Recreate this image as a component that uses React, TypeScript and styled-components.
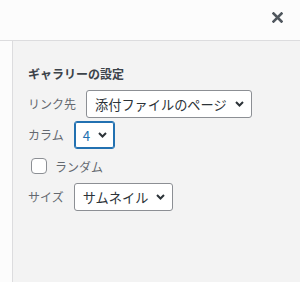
import React from "react";
import styled, { createGlobalStyle } from "styled-components";

const Global = createGlobalStyle`
  html, body { margin: 0; padding: 0; }
  body {
    width: 300px;
    height: 282px;
    overflow: hidden;
    font-family: "Noto Sans CJK JP", "Noto Sans", sans-serif;
    background: #fcfcfc;
  }
`;

const Frame = styled.div`
  width: 300px;
  height: 282px;
  display: flex;
  flex-direction: column;
`;

const Header = styled.header`
  height: 41px;
  flex: none;
  display: flex;
  justify-content: flex-end;
  align-items: center;
  padding-right: 17px;
  padding-bottom: 5px;
  box-sizing: border-box;
  background: #fcfcfc;
  border-bottom: 1px solid #dcdcde;
`;

const CloseButton = styled.button`
  border: 0;
  background: none;
  padding: 0;
  width: 12px;
  height: 12px;
  display: flex;
  align-items: center;
  justify-content: center;
  color: #50575e;
  cursor: pointer;
`;

const Body = styled.div`
  flex: 1;
  display: flex;
`;

const Gutter = styled.div`
  width: 12px;
  flex: none;
  background: #fcfcfc;
  border-right: 1px solid #dcdcde;
`;

const Panel = styled.section`
  flex: 1;
  background: #f3f3f3;
  padding: 24px 0 0 15px;
  display: flex;
  flex-direction: column;
  align-items: flex-start;
`;

const Title = styled.h2`
  margin: 0 0 7px 0;
  font-size: 12px;
  line-height: 18px;
  font-weight: 700;
  color: #3c434a;
`;

const Row = styled.div`
  display: flex;
  align-items: center;
  height: 28px;
  margin-bottom: 3px;
`;

const Label = styled.span`
  font-size: 12px;
  color: #646970;
  margin-right: 10px;
  line-height: 28px;
`;

const SelectBox = styled.div<{ $focused?: boolean }>`
  display: inline-flex;
  align-items: center;
  height: 28px;
  box-sizing: border-box;
  border: 1px solid ${(p) => (p.$focused ? "#2271b1" : "#8c8f94")};
  box-shadow: ${(p) => (p.$focused ? "inset 0 0 0 1px #2271b1" : "none")};
  border-radius: 3px;
  background: #fff;
  padding: 0 7px 0 8px;
  font-size: 13.2px;
  color: ${(p) => (p.$focused ? "#2271b1" : "#2c3338")};
  white-space: nowrap;
`;

const Chevron = styled.svg`
  margin-left: 8px;
  flex: none;
  color: #2c3338;
`;

const CheckRow = styled.label`
  display: flex;
  align-items: center;
  height: 28px;
  margin-bottom: 3px;
  padding-left: 3px;
`;

const Box = styled.span`
  width: 16px;
  height: 16px;
  box-sizing: border-box;
  border: 1px solid #8c8f94;
  border-radius: 4px;
  background: #fff;
  margin-right: 8px;
`;

const CheckText = styled.span`
  font-size: 12px;
  color: #646970;
`;

const Arrow = () => (
  <Chevron width="9" height="6" viewBox="0 0 9 6">
    <polyline
      points="1,1 4.5,4.5 8,1"
      fill="none"
      stroke="currentColor"
      strokeWidth="2"
    />
  </Chevron>
);

const Select = ({ value, focused }: { value: string; focused?: boolean }) => (
  <SelectBox $focused={focused}>
    <span>{value}</span>
    <Arrow />
  </SelectBox>
);

export default function App() {
  return (
    <>
      <Global />
      <Frame>
        <Header>
          <CloseButton aria-label="閉じる">
            <svg width="11" height="11" viewBox="0 0 11 11">
              <path
                d="M1.5 1.5 L9.5 9.5 M9.5 1.5 L1.5 9.5"
                stroke="currentColor"
                strokeWidth="2.6"
                strokeLinecap="square"
              />
            </svg>
          </CloseButton>
        </Header>
        <Body>
          <Gutter />
          <Panel>
            <Title>ギャラリーの設定</Title>
            <Row>
              <Label>リンク先</Label>
              <Select value="添付ファイルのページ" />
            </Row>
            <Row>
              <Label>カラム</Label>
              <Select value="4" focused />
            </Row>
            <CheckRow>
              <Box />
              <CheckText>ランダム</CheckText>
            </CheckRow>
            <Row>
              <Label>サイズ</Label>
              <Select value="サムネイル" />
            </Row>
          </Panel>
        </Body>
      </Frame>
    </>
  );
}
